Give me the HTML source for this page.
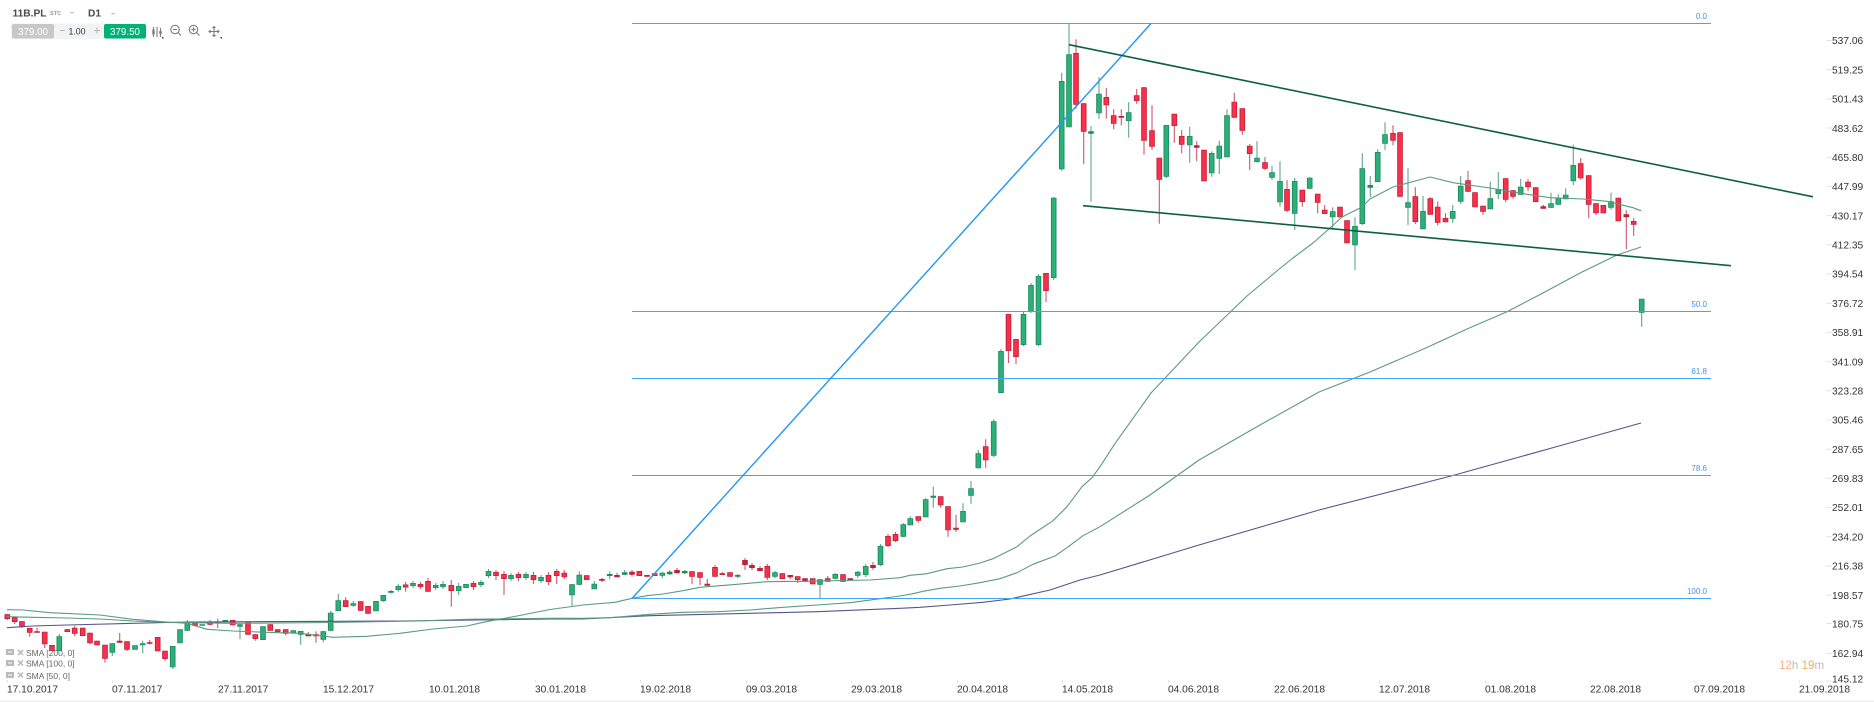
<!DOCTYPE html>
<html>
<head>
<meta charset="utf-8">
<style>
html,body{margin:0;padding:0;background:#fff;width:1874px;height:702px;overflow:hidden}
svg{position:absolute;left:0;top:0;display:block;filter:blur(.3px)}
text{font-family:"Liberation Sans",sans-serif}
.d{font-size:10.2px;fill:#333}
.p{font-size:10.2px;fill:#333}
.f{font-size:8px;fill:#3f93ee}
.s{font-size:8.5px;fill:#666}
</style>
</head>
<body>
<svg width="1874" height="702" viewBox="0 0 1874 702" xmlns="http://www.w3.org/2000/svg">
<rect width="1874" height="702" fill="#fff"/>
<rect y="700.5" width="1874" height="1.5" fill="#ececec"/>

<g fill="none">
<!-- green wicks -->
<path stroke="#5fa588" stroke-width="1.1" d="M59.3 634V651M112.3 643V656M142.7 640.7V653.3M172.7 646V669M187.3 620V631M240 624V639.3M300.7 631V644.7M323.3 631V642.3M330.7 610.7V631M338.3 594V611M353.3 601V606.7M383.3 595V602M391 590V593.5M398.3 584V591.7M413 581V588M435.7 583V590M443 581V589M458.7 583V595M481 580V587M488.5 569V578M511 573V581M526 572V580M541 575V583M572 584V606M579.3 571.3V585M594.3 581V589M609.7 571.3V579.3M624.7 570V575M662.3 572V578.3M669.7 570V575M684.7 570V574M737.7 574V578.3M775 571V578.3M820 579V598.3M835.3 573V579M857.7 571V578M865.7 564V577M880.5 544V566M903.3 523V537M910.3 516.3V525.3M925.7 498V517.3M933.3 486.7V507.7M963 503.3V522.3M971 481V503.7M978.3 450V468.3M993.7 419.3V457.3M1001 349V393M1023.5 312V346M1031 283V313M1038.5 274V346M1053.7 197V280M1061.7 72.7V170.7M1069 23.5V127.3M1091 126V201.7M1099 77.3V118.7M1128.7 102.3V137.7M1166.3 125V178M1189.7 126.7V162.7M1211.7 151.3V176.7M1219.3 140.7V174M1227 109.3V157.3M1257 141.3V162.7M1272 165.7V180M1280 161.3V206.7M1294.7 177.7V230M1309.7 177V189M1332.7 207.3V228M1355 217.3V270M1362.3 153.3V225M1370.3 176V197.3M1377.7 149.3V182M1385 122.3V150M1408 168.3V225.3M1423 196V229.3M1452.7 205V222.7M1460.7 176V204M1490.3 181.7V209.3M1498.3 172V199M1520.7 178.7V194.7M1551 192.7V207.7M1558.3 194.3V204.7M1565.7 188.3V199.3M1573.3 144.7V185M1611 192.7V210M1641.7 298.7V326.7"/>
<!-- red wicks -->
<path stroke="#c9596c" stroke-width="1.1" d="M7.3 614V620M14.7 617V624M22 621V628M29.7 628V636.7M37 627.7V632.7M44.7 631.7V648M52 645V651M67.3 629V632M74.7 625.7V636.3M82.7 627.7V636M90 632.7V644.3M97 640.7V645.3M105 644.7V662.7M119.7 633V642.7M127 641.3V651M149.7 640V644.5M157.7 637V651.3M165 650.7V661M195 621.7V625.7M210 620V625M217.7 618.7V628M232.7 620V625.3M248 622.3V634.7M255.3 634.3V640.7M270.3 624.3V630.7M277.7 629.3V632M285.7 629.3V635.3M308.3 632V636.3M316 631.3V642.7M345.7 597.3V607M360.7 601.3V610.7M368 606V613.7M405.6 582V591.7M420.5 582V589M428 578V591.7M451.3 580V606.7M473.5 581V590M496 570V580M504 571V595M518.5 572V581M533.5 572V584M548.5 572V585M556.7 569V584M564.3 570V579M586.7 575.3V580M602 577.7V582M617 572.7V577.3M632 570V576.7M639.3 571V576M647 575V576.7M654.7 573.3V576M677 568V573.3M692 571.3V584M700 572.3V585M707.3 579V585.7M715 565V576.7M722.3 571.7V575M730 572.3V576.7M745 558V570M752 563V570M760 566V571M767.3 564V580M782.3 573.3V579M790.3 575V579.3M797.7 576.3V583M805 578.3V581.7M812.7 578.3V584.3M827.7 576V581.7M843 574.3V581.7M850.3 578.3V580.3M873 562V570M888 534V547M895.5 532V542M918.3 516.3V522.7M940.7 496.3V507.7M948 506.3V536.7M956 514.7V532M985.7 439.3V467.7M1008.5 314V363M1016 339V364M1046 273V302M1076 39.3V108.7M1083.7 103.3V164.3M1106.3 88V118.7M1113.7 109.3V129.3M1121.3 109.3V125.3M1136.7 89V103.7M1144 87.3V154.7M1152 105.3V150M1159.3 157.7V223.7M1174.3 113.7V142.7M1181.7 130V153.3M1196.7 141.3V161.3M1204 149.7V181.3M1234.3 92.7V117.7M1242.3 108.3V134.7M1249.7 144V170M1265 157V170M1287 180V212M1302.3 189.7V206.7M1317.7 193.7V213.3M1324.7 205V214M1340 206.7V217.3M1347 220.3V243.3M1393 125.3V145.3M1400 132.3V196.7M1415.3 187.3V224M1430.3 197.3V214.7M1437.7 201.7V225.3M1445.5 213.3V222.3M1468 171V191.7M1475 192.3V207.3M1483 205.7V214.7M1505.7 178.3V202.3M1513 190.3V198.7M1528 179V191M1535.7 187.3V202M1543.3 204.7V208.7M1580.7 158V179.7M1588.7 175.3V218.3M1596 203.3V215M1603.3 205V213.3M1618.3 197.7V221.3M1626.3 210.3V249.3M1633.7 218.3V236"/>
<!-- green bodies -->
<path stroke="#1d8a61" stroke-width="5.6" d="M59.3 636.3V651M112.3 643.3V652.7M135 645.3V649.7M142.7 643.3V645.3M172.7 646V667.3M180 629.3V643.3M187.3 622.3V630.7M202.3 624.3V625.7M225.3 620V622.3M240 624.3V626.7M263 626.3V640M293.3 630.3V633.3M300.7 631V634.7M323.3 631.3V639.7M330.7 612.7V630.7M338.3 600.3V611M353.3 603.3V605.7M376 601V611.3M383.3 595V601M391 591V592.7M398.3 586V590M413 583V586M435.7 585V588M443 584V587M458.7 586V591M466 584V588M481 582V585M488.5 571V576M511 575V579M526 574V578M541 577V581M572 584.3V595.3M579.3 574.7V584.7M594.3 583.7V589.3M609.7 574V576M624.7 572.3V574.7M662.3 572.7V575.7M669.7 571.7V574.3M684.7 571V573.3M737.7 575V576.7M775 572.3V576.7M820 579.3V584.7M835.3 574V578.7M857.7 571.7V575.7M865.7 566V575M880.5 546V565M903.3 524.3V536.7M910.3 518.3V525.3M925.7 499.3V517.3M933.3 495.7V497.7M963 511V522.3M971 488.3V495.7M978.3 453.3V468.3M993.7 421.3V455.7M1001 351V393M1023.5 314V345M1031 285V312M1038.5 276V345M1053.7 197.7V278M1061.7 81V169.3M1069 54.3V127.3M1091 131.3V133.7M1099 93.7V113.3M1128.7 112.3V121M1166.3 125V176.7M1189.7 136V145.3M1211.7 153V173.3M1219.3 145.7V158.7M1227 115.3V157.3M1257 157.7V162M1272 172.3V177.7M1280 181V202.3M1294.7 181V213.7M1309.7 177.7V188.7M1332.7 211.3V217.3M1355 226V245.3M1362.3 168.3V224M1370.3 185V187.7M1377.7 152V182M1385 134.3V143.7M1408 202.3V207.7M1423 211V229.3M1452.7 211V218.7M1460.7 185.7V201.7M1490.3 198.3V209.3M1498.3 189.3V194M1520.7 186.7V194.7M1551 203.3V207.7M1558.3 197.7V204.7M1565.7 194.7V199.3M1573.3 165V181.3M1611 201.3V207.7M1641.7 298.7V312.7"/>
<path stroke="#2bb077" stroke-width="3.8" d="M59.3 637V650.3M112.3 644V652M135 646V649M142.7 644V644.6M172.7 646.7V666.6M180 630V642.6M187.3 623V630M240 625V626M263 627V639.3M293.3 631V632.6M300.7 631.7V634M323.3 632V639M330.7 613.4V630M338.3 601V610.3M353.3 604V605M376 601.7V610.6M383.3 595.7V600.3M398.3 586.7V589.3M413 583.7V585.3M435.7 585.7V587.3M443 584.7V586.3M458.7 586.7V590.3M466 584.7V587.3M481 582.7V584.3M488.5 571.7V575.3M511 575.7V578.3M526 574.7V577.3M541 577.7V580.3M572 585V594.6M579.3 575.4V584M594.3 584.4V588.6M662.3 573.4V575M775 573V576M820 580V584M835.3 574.7V578M857.7 572.4V575M865.7 566.7V574.3M880.5 546.7V564.3M903.3 525V536M910.3 519V524.6M925.7 500V516.6M963 511.7V521.6M971 489V495M978.3 454V467.6M993.7 422V455M1001 351.7V392.3M1023.5 314.7V344.3M1031 285.7V311.3M1038.5 276.7V344.3M1053.7 198.4V277.3M1061.7 81.7V168.6M1069 55V126.6M1099 94.4V112.6M1128.7 113V120.3M1166.3 125.7V176M1189.7 136.7V144.6M1211.7 153.7V172.6M1219.3 146.4V158M1227 116V156.6M1257 158.4V161.3M1272 173V177M1280 181.7V201.6M1294.7 181.7V213M1309.7 178.4V188M1332.7 212V216.6M1355 226.7V244.6M1362.3 169V223.3M1377.7 152.7V181.3M1385 135V143M1408 203V207M1423 211.7V228.6M1452.7 211.7V218M1460.7 186.4V201M1490.3 199V208.6M1498.3 190V193.3M1520.7 187.4V194M1551 204V207M1558.3 198.4V204M1565.7 195.4V198.6M1573.3 165.7V180.6M1611 202V207M1641.7 299.4V312"/>
<!-- red bodies -->
<path stroke="#bc2238" stroke-width="5.6" d="M7.3 614.3V619M14.7 617.3V622M22 621.3V627M29.7 628V632.7M37 631.3V632.7M44.7 631.7V644.3M52 645V651M67.3 629.3V632M74.7 627.7V633.7M82.7 627.7V636M90 632.7V643.3M97 640.7V645.3M105 644.7V658.7M119.7 640.7V642.7M127 641.3V649.7M149.7 642.3V643.7M157.7 637V651.3M165 650.7V659M195 621.7V625.7M210 621.7V624.7M217.7 621.7V623M232.7 620V625.3M248 622.3V634.7M255.3 634.3V639M270.3 624.3V630.7M277.7 629.3V632M285.7 629.3V633.7M308.3 634.3V636.3M316 634.3V636.3M345.7 600.3V607M360.7 601.3V610.7M368 606V613.7M405.6 584.5V587.5M420.5 584V587M428 581V591.7M451.3 585V591M473.5 583V587M496 572V576M504 574V579M518.5 574V578M533.5 575V580M548.5 575V582M556.7 571V576M564.3 572.7V577.3M586.7 575.3V580M602 579V580.7M617 575V577.3M632 571.7V574.7M639.3 571V576M647 575V576.7M654.7 573.3V576M677 570V573.3M692 571.3V576.7M700 572.3V577.7M707.3 583.7V585.7M715 567V576.7M722.3 573.3V575M730 572.3V576.7M745 560V565M752 565V568M760 568V571M767.3 566V577.7M782.3 573.3V579M790.3 575V577.3M797.7 576.3V580M805 578.3V581.7M812.7 578.3V584.3M827.7 578.3V581.7M843 574.3V581.7M850.3 578.3V580.3M873 565V568M888 536V546M895.5 534V541M918.3 516.3V520.7M940.7 496.3V505.3M948 506.3V530.3M956 527.7V529.7M985.7 446.3V460.3M1008.5 314V351M1016 339V357M1046 273V291M1076 53V104.7M1083.7 103.3V131.7M1106.3 97V105.3M1113.7 115.3V123.7M1121.3 116V117.7M1136.7 95.3V101M1144 87.3V140.7M1152 130.3V146.7M1159.3 157.7V179.7M1174.3 113.7V126M1181.7 136V144.7M1196.7 145.3V147.7M1204 149.7V181.3M1234.3 101.7V117.7M1242.3 108.3V130.7M1249.7 145.7V154M1265 162.3V168.7M1287 189V210.7M1302.3 189.7V202M1317.7 193.7V202.7M1324.7 209.7V214M1340 206.7V217.3M1347 220.3V243.3M1393 133V140.7M1400 132.3V196.7M1415.3 196.3V222M1430.3 198.3V214.7M1437.7 206.7V222.7M1445.5 218V222.3M1468 180.3V191.7M1475 192.3V207.3M1483 205.7V211.7M1505.7 178.3V199.7M1513 190.3V196.7M1528 181.7V187.3M1535.7 187.3V202M1543.3 206.3V208.7M1580.7 163.3V178.3M1588.7 175.3V204.7M1596 203.3V213.3M1603.3 205V213.3M1618.3 197.7V221.3M1626.3 214.3V217.3M1633.7 221V224.7"/>
<path stroke="#fb2f4a" stroke-width="3.8" d="M7.3 615V618.3M14.7 618V621.3M22 622V626.3M29.7 628.7V632M44.7 632.4V643.6M52 645.7V650.3M67.3 630V631.3M74.7 628.4V633M82.7 628.4V635.3M90 633.4V642.6M97 641.4V644.6M105 645.4V658M127 642V649M157.7 637.7V650.6M165 651.4V658.3M195 622.4V625M210 622.4V624M232.7 620.7V624.6M248 623V634M255.3 635V638.3M270.3 625V630M277.7 630V631.3M285.7 630V633M345.7 601V606.3M360.7 602V610M368 606.7V613M405.6 585.2V586.8M420.5 584.7V586.3M428 581.7V591M451.3 585.7V590.3M473.5 583.7V586.3M496 572.7V575.3M504 574.7V578.3M518.5 574.7V577.3M533.5 575.7V579.3M548.5 575.7V581.3M556.7 571.7V575.3M564.3 573.4V576.6M586.7 576V579.3M639.3 571.7V575.3M654.7 574V575.3M692 572V576M700 573V577M715 567.7V576M730 573V576M767.3 566.7V577M782.3 574V578.3M797.7 577V579.3M812.7 579V583.6M827.7 579V581M843 575V581M888 536.7V545.3M895.5 534.7V540.3M918.3 517V520M940.7 497V504.6M948 507V529.6M985.7 447V459.6M1008.5 314.7V350.3M1016 339.7V356.3M1046 273.7V290.3M1076 53.7V104M1083.7 104V131M1106.3 97.7V104.6M1113.7 116V123M1136.7 96V100.3M1144 88V140M1152 131V146M1159.3 158.4V179M1174.3 114.4V125.3M1181.7 136.7V144M1204 150.4V180.6M1234.3 102.4V117M1242.3 109V130M1249.7 146.4V153.3M1265 163V168M1287 189.7V210M1302.3 190.4V201.3M1317.7 194.4V202M1324.7 210.4V213.3M1340 207.4V216.6M1347 221V242.6M1393 133.7V140M1400 133V196M1415.3 197V221.3M1430.3 199V214M1437.7 207.4V222M1445.5 218.7V221.6M1468 181V191M1475 193V206.6M1483 206.4V211M1505.7 179V199M1513 191V196M1528 182.4V186.6M1535.7 188V201.3M1580.7 164V177.6M1588.7 176V204M1596 204V212.6M1603.3 205.7V212.6M1618.3 198.4V220.6M1633.7 221.7V224"/>
</g>

<!-- SMAs -->
<g fill="none" stroke-width="1.1" stroke-linejoin="round">
<path stroke="#55558f" d="M7 627.7L33 626L67 625L133 623.3L187 622L400 621L550 619L583 619L650 615.7L750 613.3L817 611.7L900 608.3L920 607.3L950 605L983 602.3L1010 599L1050 590L1080 580L1100 575L1199 545L1319 510L1451 476L1559 446L1641 423"/>
<path stroke="#5b9a80" d="M7 616.7L33 617.3L67 618L100 619L133 621L167 622.3L233 623.3L333 622.5L417 621L467 619.3L550 618.3L583 618.3L610 617.7L650 614.3L683 612.3L717 611.7L750 610L783 607.3L817 605L850 602.7L883 598.3L900 596L913 593.7L923 591.3L940 588.3L960 586L980 582.7L1000 578.7L1017 572.7L1033 564.3L1055 556L1067 547.7L1083 535.7L1100 526.7L1150 495L1199 460L1260 425L1319 392L1370 372L1428 347L1467 329L1507 311.7L1543 293L1580 273L1617 255L1641 247"/>
<path stroke="#5b9a80" d="M7 609.7L23 610L50 612.7L100 615L133 619.3L167 622L187 623.3L207 629.3L233 631L267 632.3L300 633.3L323 636L333 637.3L367 636.3L400 633.3L433 629L467 626L483 622.3L517 616L550 609.5L583 605L615 602.3L632 598.3L647 595.7L663 594L683 590.7L700 587.3L737 584.3L767 581.7L800 581.3L870 580L900 577.7L910 575.3L927 573.7L947 568.7L963 567L980 563L993 558.7L1017 546.7L1030 536L1053 520.7L1067 506.7L1082 486.7L1092 477.7L1100 466.7L1115 443.6L1151 393L1199 342L1247 296L1278 270L1293 258L1313 243L1330 228L1342 217L1362 207L1370 199L1393 187L1430 177L1453 182.7L1490 188L1527 194.3L1550 197.7L1583 199L1607 201.3L1633 207.7L1641 210.7"/>
</g>

<!-- fib lines -->
<g stroke="#45a5f5" stroke-width="1" fill="none">
<path d="M632 23.5H1711M632 311.5H1711M632 378.5H1711M632 475.5H1711M632 598.5H1711"/>
</g>
<path d="M632 598.5L1151 23.5" stroke="#2196f3" stroke-width="1.4" fill="none"/>
<path d="M1069 44.7L1813 196.8M1083 205.7L1731 265.7" stroke="#0e5f45" stroke-width="1.6" fill="none"/>

<g class="f" text-anchor="end">
<text class="f" x="1707" y="19">0.0</text>
<text class="f" x="1707" y="307">50.0</text>
<text class="f" x="1707" y="374">61.8</text>
<text class="f" x="1707" y="471">78.6</text>
<text class="f" x="1707" y="594">100.0</text>
</g>

<!-- price axis -->
<path stroke="#e4e4e4" fill="none" d="M1826 40.5h6M1826 69.7h6M1826 98.9h6M1826 128h6M1826 157.3h6M1826 186.4h6M1826 215.6h6M1826 244.8h6M1826 274h6M1826 303.2h6M1826 332.4h6M1826 361.6h6M1826 390.8h6M1826 420h6M1826 449.2h6M1826 478.3h6M1826 507.5h6M1826 536.7h6M1826 565.9h6M1826 595.1h6M1826 623.5h6M1826 653.5h6M1826 681h6"/>
<g>
<text class="p" x="1832" y="44.2">537.06</text>
<text class="p" x="1832" y="73.6">519.25</text>
<text class="p" x="1832" y="102.7">501.43</text>
<text class="p" x="1832" y="131.8">483.62</text>
<text class="p" x="1832" y="161">465.80</text>
<text class="p" x="1832" y="190.1">447.99</text>
<text class="p" x="1832" y="219.3">430.17</text>
<text class="p" x="1832" y="248.5">412.35</text>
<text class="p" x="1832" y="277.7">394.54</text>
<text class="p" x="1832" y="306.9">376.72</text>
<text class="p" x="1832" y="336.1">358.91</text>
<text class="p" x="1832" y="365.3">341.09</text>
<text class="p" x="1832" y="394.5">323.28</text>
<text class="p" x="1832" y="423.7">305.46</text>
<text class="p" x="1832" y="452.9">287.65</text>
<text class="p" x="1832" y="482">269.83</text>
<text class="p" x="1832" y="511.2">252.01</text>
<text class="p" x="1832" y="540.4">234.20</text>
<text class="p" x="1832" y="569.6">216.38</text>
<text class="p" x="1832" y="598.8">198.57</text>
<text class="p" x="1832" y="627.3">180.75</text>
<text class="p" x="1832" y="657.2">162.94</text>
<text class="p" x="1832" y="682.3">145.12</text>
</g>

<!-- date axis -->
<path stroke="#e4e4e4" fill="none" d="M7.5 680v3M112.5 680v3M218.5 680v3M323.5 680v3M429.5 680v3M535.5 680v3M640.5 680v3M746.5 680v3M851.5 680v3M957.5 680v3M1062.5 680v3M1168.5 680v3M1274.5 680v3M1379.5 680v3M1485.5 680v3M1590.5 680v3M1694.5 680v3M1799.5 680v3"/>
<g>
<text class="d" x="7" y="692.5">17.10.2017</text>
<text class="d" x="112" y="692.5">07.11.2017</text>
<text class="d" x="218" y="692.5">27.11.2017</text>
<text class="d" x="323" y="692.5">15.12.2017</text>
<text class="d" x="429" y="692.5">10.01.2018</text>
<text class="d" x="535" y="692.5">30.01.2018</text>
<text class="d" x="640" y="692.5">19.02.2018</text>
<text class="d" x="746" y="692.5">09.03.2018</text>
<text class="d" x="851" y="692.5">29.03.2018</text>
<text class="d" x="957" y="692.5">20.04.2018</text>
<text class="d" x="1062" y="692.5">14.05.2018</text>
<text class="d" x="1168" y="692.5">04.06.2018</text>
<text class="d" x="1274" y="692.5">22.06.2018</text>
<text class="d" x="1379" y="692.5">12.07.2018</text>
<text class="d" x="1485" y="692.5">01.08.2018</text>
<text class="d" x="1590" y="692.5">22.08.2018</text>
<text class="d" x="1694" y="692.5">07.09.2018</text>
<text class="d" x="1799" y="692.5">21.09.2018</text>
</g>

<!-- countdown -->
<text x="1779" y="669" font-size="11.6"><tspan fill="#f9ae8e">12</tspan><tspan fill="#bbbbbb">h </tspan><tspan fill="#f8a64e">19</tspan><tspan fill="#bbbbbb">m</tspan></text>

<!-- legend -->
<g>
<rect x="6" y="649" width="8" height="6" fill="#b9b9b9"/><path d="M8 652h4" stroke="#fff"/>
<path d="M18 650l5 5M23 650l-5 5" stroke="#b5b5b5" stroke-width="1.4"/>
<text class="s" x="26" y="656">SMA [200, 0]</text>
<rect x="6" y="660" width="8" height="6" fill="#b9b9b9"/><path d="M8 663h4" stroke="#fff"/>
<path d="M18 660.5l5 5M23 660.5l-5 5" stroke="#b5b5b5" stroke-width="1.4"/>
<text class="s" x="26" y="666.5">SMA [100, 0]</text>
<rect x="6" y="672" width="8" height="6" fill="#b9b9b9"/><path d="M8 675h4" stroke="#fff"/>
<path d="M18 672.5l5 5M23 672.5l-5 5" stroke="#b5b5b5" stroke-width="1.4"/>
<text class="s" x="26" y="679">SMA [50, 0]</text>
</g>

<!-- header -->
<text x="12.5" y="16.5" font-size="10.2" font-weight="bold" fill="#4a4a4a">11B.PL</text>
<text x="50" y="15" font-size="5.6" font-weight="bold" fill="#9a9a9a">STC</text>
<path d="M69.5 12h5l-2.500 2z" fill="#c4c4c4"/>
<text x="88" y="16.5" font-size="10.2" font-weight="bold" fill="#4a4a4a">D1</text>
<path d="M110.500 13h5l-2.500 2z" fill="#c4c4c4"/>

<rect x="11" y="23.5" width="135" height="15.500" fill="#f1f3f5"/>
<rect x="12" y="24" width="42" height="14.500" rx="2" fill="#c8c8c8"/>
<text x="33" y="34.800" font-size="9.800" fill="#fff" text-anchor="middle">379.00</text>
<path d="M60 30.500h5M94 30.500h6M97 27.500v6" stroke="#b8b8b8" fill="none"/>
<text x="77" y="34.500" font-size="8.800" fill="#333" text-anchor="middle">1.00</text>
<rect x="104" y="24" width="42" height="14.500" rx="2" fill="#00b176"/>
<text x="125" y="34.800" font-size="9.800" fill="#fff" text-anchor="middle">379.50</text>

<!-- icons -->
<g fill="none" stroke="#7d7d7d" stroke-width="1.100">
<path d="M153.500 27v10M157 27v10M160.500 28v9"/>
<path d="M152.300 29.500h2.400v5h-2.400zM159.300 31h2.400v3h-2.400z" fill="#7d7d7d" stroke="none"/>
<circle cx="175" cy="29.500" r="4.200"/><path d="M178 32.500l3 3M172.800 29.500h4.400"/>
<circle cx="193.500" cy="29.500" r="4.200"/><path d="M196.500 32.500l3 3M191.300 29.500h4.400M193.500 27.300v4.400"/>
<path d="M214 26.500v10M209 31.500h10M212.500 28l1.500-1.500 1.500 1.500M212.500 35l1.500 1.500 1.500-1.500M210.500 30l-1.500 1.500 1.500 1.500M217.500 30l1.500 1.500-1.500 1.500"/>
</g>
<path d="M162 37h1.500v1.500H162zM220.500 37H222v1.500h-1.500z" fill="#333"/>
</svg>
</body>
</html>
